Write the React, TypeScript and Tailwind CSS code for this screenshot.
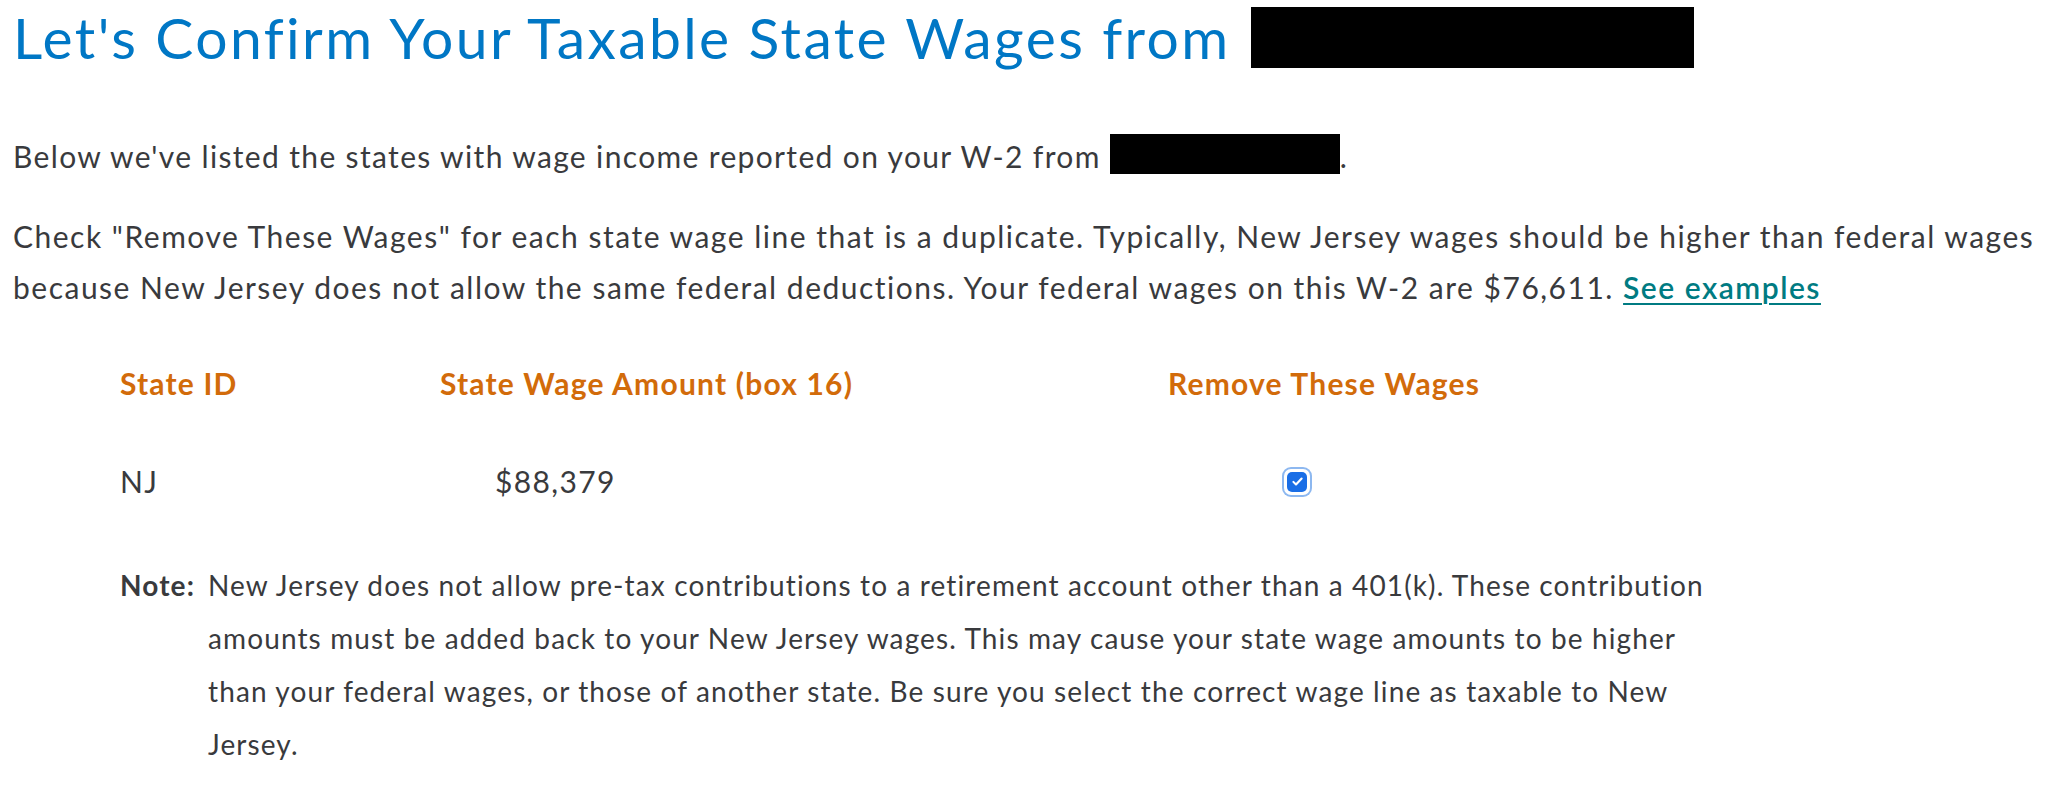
import { useState } from "react";

const BODY_FONT = { fontFamily: '"Lato", "Open Sans", sans-serif' };

function Checkbox({ checked, onChange }: { checked: boolean; onChange: () => void }) {
  return (
    <button
      type="button"
      onClick={onChange}
      className="flex h-[26px] w-[26px] items-center justify-center rounded-[7px] ring-2 ring-[#8db8f0]"
    >
      <span
        className={`flex h-[20px] w-[20px] items-center justify-center rounded-[5px] ${
          checked ? "bg-[#1a6ee6]" : "border-2 border-gray-400 bg-white"
        }`}
      >
        {checked && (
          <svg viewBox="0 0 20 20" className="h-[15px] w-[15px]">
            <path
              d="M4.5 10.5l3.5 3.5 7.5-8"
              fill="none"
              stroke="white"
              strokeWidth="2.8"
              strokeLinecap="round"
              strokeLinejoin="round"
            />
          </svg>
        )}
      </span>
    </button>
  );
}

export default function App() {
  const [remove, setRemove] = useState(true);

  return (
    <div className="min-h-screen bg-white pl-[13px] pt-[7px] text-[#393a3d]" style={BODY_FONT}>
      <h1 className="flex items-center text-[57px] leading-[61px] font-normal tracking-[0.042em] text-[#0077c5]">
        <span>Let's Confirm Your Taxable State Wages from</span>
        <span className="ml-[20px] inline-block h-[61px] w-[443px] bg-black" />
      </h1>

      <p className="mt-[60px] text-[30px] leading-[51px] tracking-[0.045em]">
        Below we've listed the states with wage income reported on your W-2 from{" "}
        <span className="inline-block h-[40px] w-[230px] translate-y-[6px] bg-black" />.
      </p>

      <p className="mt-[29px] text-[30px] leading-[51px] tracking-[0.05em]">
        Check "Remove These Wages" for each state wage line that is a duplicate. Typically, New
        Jersey wages should be higher than federal wages because New Jersey does not allow the same
        federal deductions. Your federal wages on this W-2 are $76,611.{" "}
        <a href="#" className="font-semibold text-[#007b82] underline decoration-2 underline-offset-4">
          See examples
        </a>
      </p>

      <div className="ml-[107px] mt-[48px]">
        <div className="grid grid-cols-[320px_728px_1fr] text-[30px] font-bold tracking-[0.04em] text-[#d26b0a]">
          <div>State ID</div>
          <div>State Wage Amount (box 16)</div>
          <div>Remove These Wages</div>
        </div>
        <div className="mt-[53px] grid grid-cols-[320px_728px_1fr] items-center text-[30px] tracking-[0.045em]">
          <div>NJ</div>
          <div className="pl-[55px]">$88,379</div>
          <div className="pl-[116px]">
            <Checkbox checked={remove} onChange={() => setRemove(!remove)} />
          </div>
        </div>

        <div className="mt-[55px] flex text-[28px] leading-[53px] tracking-[0.04em]">
          <span className="w-[88px] shrink-0 font-bold">Note:</span>
          <p className="w-[1515px]">
            New Jersey does not allow pre-tax contributions to a retirement account other than a
            401(k). These contribution amounts must be added back to your New Jersey wages. This may
            cause your state wage amounts to be higher than your federal wages, or those of another
            state. Be sure you select the correct wage line as taxable to New Jersey.
          </p>
        </div>
      </div>
    </div>
  );
}
